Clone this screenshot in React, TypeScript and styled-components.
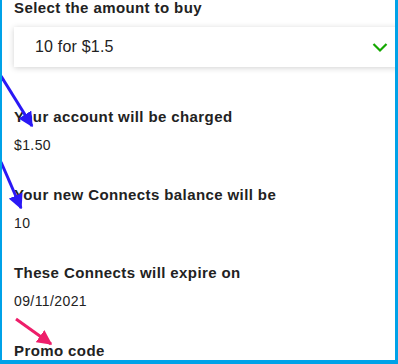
import React from "react";
import styled, { createGlobalStyle } from "styled-components";

const GlobalStyle = createGlobalStyle`
  html, body {
    margin: 0;
    padding: 0;
    background: #fff;
  }
  * {
    box-sizing: border-box;
  }
`;

interface IInfoRow {
  label: string;
  value: string;
}

const infoRows: IInfoRow[] = [
  { label: "Your account will be charged", value: "$1.50" },
  { label: "Your new Connects balance will be", value: "10" },
  { label: "These Connects will expire on", value: "09/11/2021" },
];

const App: React.FC = () => {
  return (
    <>
      <GlobalStyle />
      <Frame>
        <Content>
          <Heading>Select the amount to buy</Heading>
          <SelectBox>
            <span>10 for $1.5</span>
            <svg width="16" height="11" viewBox="0 0 16 11">
              <polyline
                points="1.5,2 8,8.5 14.5,2"
                fill="none"
                stroke="#14a800"
                strokeWidth="2.2"
              />
            </svg>
          </SelectBox>

          {infoRows.map((row, index) => (
            <InfoBlock key={index} first={index === 0}>
              <Heading>{row.label}</Heading>
              <Value>{row.value}</Value>
            </InfoBlock>
          ))}

          <InfoBlock first={false}>
            <Heading>Promo code</Heading>
          </InfoBlock>
        </Content>

        {/* annotation arrows drawn over the screenshot */}
        <Annotations width="398" height="364" viewBox="0 0 398 364">
          <defs>
            <marker
              id="blueHead"
              viewBox="0 0 10 10"
              refX="9"
              refY="5"
              markerWidth="5"
              markerHeight="5"
              orient="auto"
            >
              <path d="M0,0 L10,5 L0,10 z" fill="#2a18f5" />
            </marker>
            <marker
              id="pinkHead"
              viewBox="0 0 10 10"
              refX="9"
              refY="5"
              markerWidth="5"
              markerHeight="5"
              orient="auto"
            >
              <path d="M0,0 L10,5 L0,10 z" fill="#ee1e6a" />
            </marker>
          </defs>
          <line
            x1="1"
            y1="76"
            x2="32"
            y2="126"
            stroke="#2a18f5"
            strokeWidth="3"
            markerEnd="url(#blueHead)"
          />
          <line
            x1="1"
            y1="162"
            x2="21"
            y2="208"
            stroke="#2a18f5"
            strokeWidth="3"
            markerEnd="url(#blueHead)"
          />
          <line
            x1="16"
            y1="319"
            x2="51"
            y2="344"
            stroke="#ee1e6a"
            strokeWidth="3"
            markerEnd="url(#pinkHead)"
          />
        </Annotations>
      </Frame>
    </>
  );
};

export default App;

const Frame = styled.div`
  position: relative;
  width: 398px;
  height: 364px;
  overflow: hidden;
  background: #fff;
  border-left: 2px solid #00a2e8;
  border-right: 3px solid #00a2e8;
  border-bottom: 4px solid #00a2e8;
`;

const Content = styled.div`
  display: flex;
  flex-direction: column;
  padding: 0 0 0 12px;
  margin-top: -1px;
  font-family: "Liberation Sans", Arial, sans-serif;
  color: #222;
`;

const Heading = styled.div`
  font-size: 15px;
  line-height: 18px;
  font-weight: 700;
  letter-spacing: 0.4px;
  color: #222;
`;

const SelectBox = styled.div`
  display: flex;
  align-items: center;
  justify-content: space-between;
  height: 40px;
  margin-top: 10px;
  margin-right: -4px;
  padding: 0 11px 0 21px;
  background: #fff;
  box-shadow: 0 1px 6px rgba(0, 0, 0, 0.18);
  font-size: 16px;
  letter-spacing: 0.2px;
  color: #222;

  svg {
    margin-top: 1px;
  }
`;

const InfoBlock = styled.div<{ first: boolean }>`
  display: flex;
  flex-direction: column;
  gap: 11px;
  margin-top: ${(props) => (props.first ? "41px" : "32px")};
`;

const Value = styled.div`
  font-size: 14px;
  line-height: 17px;
  letter-spacing: 0.4px;
  color: #222;
`;

const Annotations = styled.svg`
  position: absolute;
  left: -2px;
  top: 0;
  pointer-events: none;
`;
